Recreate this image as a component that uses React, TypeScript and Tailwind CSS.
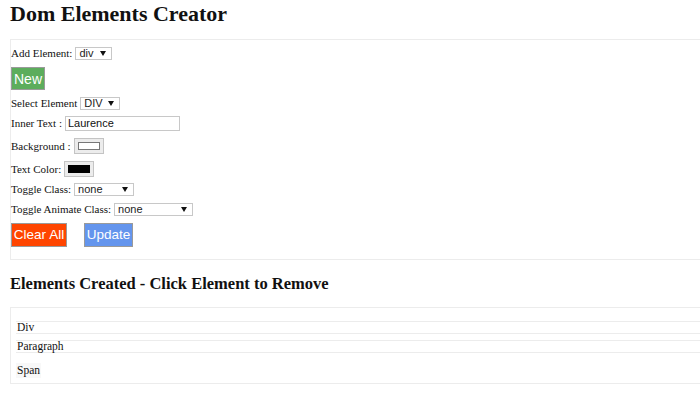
import React from 'react';

const serif = { fontFamily: '"Liberation Serif", "Times New Roman", serif' };

const Arrow: React.FC = () => (
    <svg width="6" height="5" viewBox="0 0 6 5" className="shrink-0">
        <path d="M0 0 L6 0 L3 5 Z" fill="#111" />
    </svg>
);

// Fake native <select> box, drawn so its size is exact
const Select: React.FC<{ value: string; w: string; className?: string }> = ({ value, w, className }) => (
    <div
        className={`${w} h-[13px] border border-[#c8c8c8] bg-white flex items-center justify-between pl-[3px] pr-[5px] font-['Liberation_Sans',Arial,sans-serif] text-[11px] leading-none text-[#222] ${className ?? ''}`}
    >
        <span>{value}</span>
        <Arrow />
    </div>
);

const ColorInput: React.FC<{ swatch: string; border: string }> = ({ swatch, border }) => (
    <div className="w-[30px] h-[16px] border border-[#c4c4c4] bg-[#ececec] flex items-center justify-center">
        <div className={`w-[22px] h-[8px] border ${border} ${swatch}`} />
    </div>
);

export default function App() {
    const created = [
        { label: 'Div', lined: true },
        { label: 'Paragraph', lined: true },
    ];

    return (
        <div className="w-[700px] h-[397px] overflow-hidden bg-white text-[#111]" style={serif}>
            {/* Title */}
            <h1 className="pl-[10px] text-[22px] leading-[28px] font-bold">Dom Elements Creator</h1>

            {/* Controls panel */}
            <div className="ml-[10px] mt-[11px] w-[720px] border border-[#ececec] pt-[3px] pb-[12px] flex flex-col text-[11px]">
                <div className="h-[20px] flex items-center">
                    <span>Add Element:</span>
                    <Select value="div" w="w-[37px]" className="ml-[3px]" />
                </div>

                <div className="mt-[4px]">
                    <button className="h-[23px] w-[34px] bg-[#5cad5c] border border-[#9a9a9a] text-white text-[14px] font-['Liberation_Sans',Arial,sans-serif] leading-none">
                        New
                    </button>
                </div>

                <div className="mt-[3px] h-[20px] flex items-center">
                    <span>Select Element</span>
                    <Select value="DIV" w="w-[40px]" className="ml-[3px]" />
                </div>

                <div className="h-[20px] flex items-center">
                    <span>Inner Text :</span>
                    <div className="ml-[3px] w-[115px] h-[15px] border border-[#c8c8c8] bg-white flex items-center pl-[2px] font-['Liberation_Sans',Arial,sans-serif] text-[11px] leading-none">
                        Laurence
                    </div>
                </div>

                <div className="mt-[3px] h-[20px] flex items-center">
                    <span>Background :</span>
                    <div className="ml-[3px]">
                        <ColorInput swatch="bg-white" border="border-[#777]" />
                    </div>
                </div>

                <div className="mt-[3px] h-[20px] flex items-center">
                    <span>Text Color:</span>
                    <div className="ml-[3px]">
                        <ColorInput swatch="bg-black" border="border-black" />
                    </div>
                </div>

                <div className="h-[20px] flex items-center">
                    <span>Toggle Class:</span>
                    <Select value="none" w="w-[60px]" className="ml-[3px]" />
                </div>

                <div className="h-[20px] flex items-center">
                    <span>Toggle Animate Class:</span>
                    <Select value="none" w="w-[79px]" className="ml-[3px]" />
                </div>

                <div className="mt-[4px] flex gap-[17px] font-['Liberation_Sans',Arial,sans-serif]">
                    <button className="h-[24px] w-[56px] bg-[#ff4500] border border-[#9a9a9a] text-white text-[13.5px] leading-none">
                        Clear All
                    </button>
                    <button className="h-[24px] w-[49px] bg-[#6495ed] border border-[#9a9a9a] text-white text-[13.5px] leading-none">
                        Update
                    </button>
                </div>
            </div>

            {/* Created list */}
            <h2 className="pl-[10px] mt-[13px] text-[16.5px] leading-[22px] font-bold">
                Elements Created - Click Element to Remove
            </h2>

            <div className="ml-[10px] mt-[12px] w-[720px] border border-[#ececec] pt-[13px] pb-[1px] pl-[5px] text-[11.5px]">
                {created.map(item => (
                    <div
                        key={item.label}
                        className="h-[13px] mb-[6px] border-y border-[#ececec] flex items-center pl-[1px] leading-none"
                    >
                        {item.label}
                    </div>
                ))}
                <div className="h-[23px] flex items-center">
                    <span className="bg-[#f8f8f8] px-[1px] py-[2px] leading-none">Span</span>
                </div>
            </div>
        </div>
    );
}
